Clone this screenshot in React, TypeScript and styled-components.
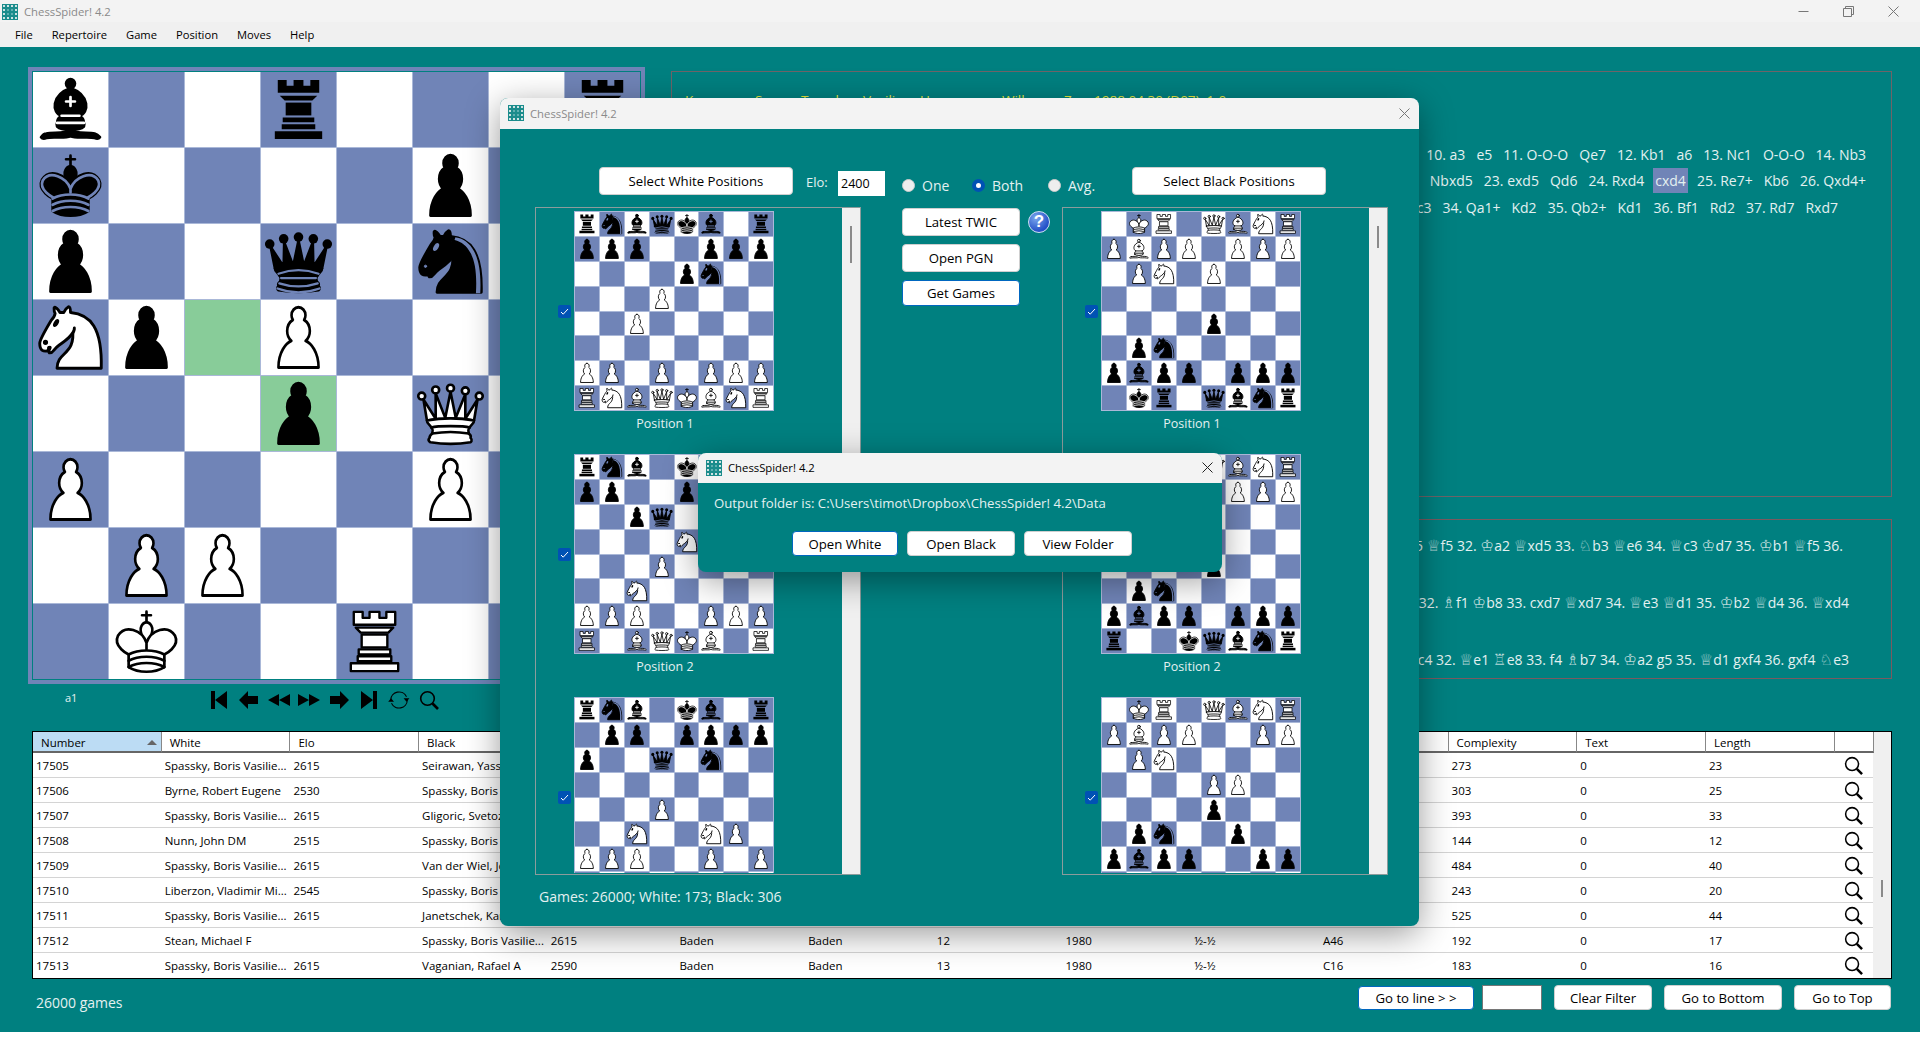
import React from 'react';
import styled, { createGlobalStyle } from 'styled-components';

const TEAL = '#008080';
const BLUE_SQ = '#7084b7';
const WHITE_SQ = '#ffffff';
const GREEN_SQ = '#88cc99';
const LIGHT = '#e4f1f1';
const UI_FONT = '"Open Sans", "Noto Sans", sans-serif';

/* ---------- pieces ---------- */

const VIEW: Record<string, string> = {
  p: '1 5.3 43 38',
  r: '0 0 76 76',
  b: '1.5 1.5 42 42',
  k: '1.5 1.7 42 42',
  q: '1 0.5 43 43',
  n: '2.5 3.5 39 39',
};

const PAWN =
  'M22.5 9c-2.21 0-4 1.79-4 4 0 .89.29 1.71.78 2.38C17.33 16.5 16 18.59 16 21c0 2.03.94 3.84 2.41 5.03-3 1.06-7.41 5.55-7.41 13.47h23c0-7.92-4.41-12.41-7.41-13.47 1.47-1.19 2.41-3 2.41-5.03 0-2.41-1.33-4.5-3.28-5.62.49-.67.78-1.49.78-2.38 0-2.21-1.79-4-4-4z';
const ROOK_PARTS = [
  'M17 8h9v6h7V8h10v6h7V8h9v13H17z',
  'M19 24h38l-5 5H24z',
  'M25 31h26v13H25z',
  'M22 46h32v5H22z',
  'M21 53h34v5H21z',
  'M14 60h48v8H14z',
];
const KNIGHT_BODY = 'M22 10c10.5 1 16.5 8 16 29H15c0-9 10-6.5 8-21';
const KNIGHT_HEAD =
  'M24 18c.38 2.91-5.55 7.37-8 9-3 2-2.82 4.34-5 4-1.042-.94 1.41-3.04 0-3-1 0 .19 1.23-1 2-1 0-4.003 1-4-4 0-2 6-12 6-12s1.89-1.9 2-3.5c-.73-.994-.5-2-.5-3 1-1 3 2.5 3 2.5h2s.78-1.992 2.5-3c1 0 1 3 1 3';
const BISHOP_FOOT =
  'M9 36c3.39-.97 10.11.43 13.5-2 3.39 2.43 10.11 1.03 13.5 2 0 0 1.65.54 3 2-.68.97-1.65.99-3 .5-3.39-.97-10.11.46-13.5-1-3.39 1.46-10.11.03-13.5 1-1.354.49-2.323.47-3-.5 1.354-1.94 3-2 3-2z';
const BISHOP_BODY =
  'M15 32c2.5 2.5 12.5 2.5 15 0 .5-1.5 0-2 0-2 0-2.5-2.5-4-2.5-4 5.5-1.5 6-11.5-5-15.5-11 4-10.5 14-5 15.5 0 0-2.5 1.5-2.5 4 0 0-.5.5 0 2z';
const BISHOP_HEAD = 'M25 8a2.5 2.5 0 1 1-5 0 2.5 2.5 0 1 1 5 0z';
const KING_MITRE = 'M22.5 25s4.5-7.5 3-10.5c0 0-1-2.5-3-2.5s-3 2.5-3 2.5c-1.5 3 3 10.5 3 10.5';
const KING_BODY =
  'M12.5 37c5.5 3.5 14.5 3.5 20 0v-7s9-4.5 6-10.5c-4-6.5-13.5-3.5-16 4V27v-3.5c-2.5-7.5-12-10.5-16-4-3 6 6 10.5 6 10.5v7';

const pieceShapes = (kind: string, detail: string): React.ReactNode => {
  switch (kind) {
    case 'P':
      return <path d={PAWN} fill="#fff" />;
    case 'p':
      return <path d={PAWN} fill="#000" />;
    case 'R':
      return (
        <g fill="#fff" strokeWidth="2.4">
          {ROOK_PARTS.map((d) => (
            <path key={d} d={d} />
          ))}
        </g>
      );
    case 'r':
      return (
        <g fill="#000" stroke="none">
          {ROOK_PARTS.map((d) => (
            <path key={d} d={d} />
          ))}
        </g>
      );
    case 'N':
      return (
        <g fill="#fff">
          <path d={KNIGHT_BODY} />
          <path d={KNIGHT_HEAD} />
          <circle cx="9" cy="25.5" r="0.6" fill="#000" />
          <ellipse cx="14.5" cy="15.5" rx="0.5" ry="1.5" transform="rotate(30 14.5 15.5)" fill="#000" />
        </g>
      );
    case 'n':
      return (
        <g fill="#000">
          <path d={KNIGHT_BODY} />
          <path d={KNIGHT_HEAD} />
          <circle cx="9" cy="25.5" r="0.6" fill={detail} stroke={detail} strokeWidth="0.5" />
          <ellipse cx="14.5" cy="15.5" rx="0.5" ry="1.5" transform="rotate(30 14.5 15.5)" fill={detail} stroke={detail} />
          <path
            d="M24.55 10.4l-.45 1.45.5.15c3.15 1 5.65 2.49 7.9 6.75S35.75 29.06 35.25 39l-.05.5h2.25l.05-.5c.5-10.06-.88-16.85-3.25-21.34-2.37-4.49-5.79-6.64-9.19-7.16l-.51-.1z"
            fill={detail}
            stroke="none"
          />
        </g>
      );
    case 'B':
    case 'b': {
      const black = kind === 'b';
      return (
        <g fill={black ? '#000' : '#fff'}>
          <path d={BISHOP_FOOT} />
          <path d={BISHOP_BODY} />
          <path d={BISHOP_HEAD} />
          <path d="M17.5 26h10M15 30h15m-7.500-14.500v5M20 18h5" fill="none" stroke={black ? detail : '#000'} />
        </g>
      );
    }
    case 'Q':
      return (
        <g fill="#fff">
          <path d="M8 12a2 2 0 1 1-4 0 2 2 0 1 1 4 0zM24.5 7.5a2 2 0 1 1-4 0 2 2 0 1 1 4 0zM41 12a2 2 0 1 1-4 0 2 2 0 1 1 4 0zM16 8.5a2 2 0 1 1-4 0 2 2 0 1 1 4 0zM33 9a2 2 0 1 1-4 0 2 2 0 1 1 4 0z" />
          <path d="M9 26c8.5-1.5 21-1.500 27 0l2-12-7 11V11l-5.500 13.500-3-15-3 15-5.500-14V25L7 14l2 12z" />
          <path d="M9 26c0 2 1.5 2 2.5 4 1 1.5 1 1 .5 3.5-1.5 1-1.5 2.5-1.5 2.5-1.5 1.5.5 2.5.5 2.5 6.5 1 16.5 1 23 0 0 0 1.5-1 0-2.5 0 0 .5-1.5-1-2.5-.5-2.5-.5-2 .5-3.5 1-2 2.5-2 2.5-4-8.5-1.5-18.5-1.5-27 0z" />
          <path d="M11.5 30c3.5-1 18.5-1 22 0M12 33.5c6-1 15-1 21 0" fill="none" />
        </g>
      );
    case 'q':
      return (
        <g fill="#000">
          <g stroke="none">
            <circle cx="6" cy="12" r="2.75" />
            <circle cx="14" cy="9" r="2.75" />
            <circle cx="22.5" cy="8" r="2.75" />
            <circle cx="31" cy="9" r="2.75" />
            <circle cx="39" cy="12" r="2.75" />
          </g>
          <path d="M9 26c8.5-1.5 21-1.5 27 0l2.5-12.5L31 25l-.3-14.1-5.2 13.6-3-14.5-3 14.5-5.2-13.6L14 25 6.5 13.5 9 26z" />
          <path d="M9 26c0 2 1.5 2 2.5 4 1 1.5 1 1 .5 3.5-1.5 1-1 2.5-1 2.5-1.5 1.5 0 2.5 0 2.5 6.5 1 16.5 1 23 0 0 0 1.5-1 0-2.5 0 0 .5-1.5-1-2.5-.5-2.5-.5-2 .5-3.5 1-2 2.5-2 2.5-4-8.5-1.5-18.5-1.5-27 0z" />
          <path d="M11 29a35 35 1 0 1 23 0M12.5 31.5h20M11.5 34.5a35 35 1 0 0 22 0M10.5 37.5a35 35 1 0 0 24 0" fill="none" stroke={detail} strokeWidth="1.3" />
        </g>
      );
    case 'K':
      return (
        <g fill="#fff">
          <path d="M22.5 11.63V6M20 8h5" fill="none" />
          <path d={KING_MITRE} />
          <path d={KING_BODY} />
          <path d="M12.5 30c5.5-3 14.5-3 20 0m-20 3.5c5.5-3 14.5-3 20 0m-20 3.5c5.5-3 14.5-3 20 0" fill="none" />
        </g>
      );
    case 'k':
      return (
        <g fill="#000">
          <path d="M22.5 11.63V6M20 8h5" fill="none" />
          <path d={KING_MITRE} />
          <path d={KING_BODY} />
          <path
            d="M32 29.5s8.5-4 6.03-9.65C34.15 14 25 18 22.5 24.5v2.1-2.1C20 18 10.85 14 6.97 19.85 4.5 25.5 13 29.5 13 29.5"
            fill="none"
            stroke={detail}
          />
          <path d="M12.5 30c5.5-3 14.5-3 20 0M12.5 33.5c5.5-3 14.5-3 20 0M12.5 37c5.5-3 14.5-3 20 0" fill="none" stroke={detail} />
        </g>
      );
    default:
      return null;
  }
};

interface PieceProps {
  kind: string;
  detail: string;
}

const Piece: React.FC<PieceProps> = ({ kind, detail }) => (
  <svg
    width="100%"
    height="100%"
    viewBox={VIEW[kind.toLowerCase()]}
    preserveAspectRatio={kind.toLowerCase() === 'p' ? 'none' : undefined}
    stroke="#000"
    strokeWidth="1.5"
    strokeLinejoin="round"
    strokeLinecap="round"
  >
    {pieceShapes(kind, detail)}
  </svg>
);

/* ---------- boards ---------- */

const expandRank = (rank: string): string[] =>
  rank.split('').flatMap((c) => (/\d/.test(c) ? Array<string>(Number(c)).fill('') : [c]));

interface BoardProps {
  fen: string;
  size: number;
  edge: string;
  marked?: string[];
}

const Board: React.FC<BoardProps> = ({ fen, size, edge, marked = [] }) => (
  <BoardGrid $cell={(size * 8 - 9) / 8} $edge={edge}>
    {fen.split('/').map((rank, r) =>
      expandRank(rank).map((piece, c) => {
        const light = (r + c) % 2 === 0;
        const bg = marked.includes(`${r}${c}`) ? GREEN_SQ : light ? WHITE_SQ : BLUE_SQ;
        return (
          <Square key={`${r}-${c}`} $bg={bg}>
            {piece && <Piece kind={piece} detail={bg} />}
          </Square>
        );
      }),
    )}
  </BoardGrid>
);

const BoardGrid = styled.div<{ $cell: number; $edge: string }>`
  display: grid;
  grid-template-columns: repeat(8, ${(p) => p.$cell}px);
  grid-auto-rows: ${(p) => p.$cell}px;
  gap: 1px;
  background: #aab8d8;
  border: 1px solid ${(p) => p.$edge};
  flex: none;
`;

const Square = styled.div<{ $bg: string }>`
  background: ${(p) => p.$bg};
  overflow: hidden;
`;

/* ---------- small drawings ---------- */

const AppIcon: React.FC = () => (
  <svg width="16" height="16" viewBox="0 0 16 16">
    <rect width="16" height="16" fill="#1b8c8c" />
    <g fill="#cfe3e3">
      {[1, 5, 9, 13].flatMap((y) =>
        [1, 5, 9, 13].map((x) =>
          x === 1 || x === 13 || y === 1 || y === 13 ? <rect key={`${x}${y}`} x={x} y={y} width="2" height="2" /> : null,
        ),
      )}
    </g>
    <g fill="#5fb0b0">
      <rect x="5" y="5" width="2" height="2" />
      <rect x="9" y="9" width="2" height="2" />
      <rect x="9" y="5" width="2" height="2" />
      <rect x="5" y="9" width="2" height="2" />
    </g>
  </svg>
);

const CloseGlyph: React.FC<{ color: string }> = ({ color }) => (
  <svg width="11" height="11" viewBox="0 0 11 11" stroke={color} strokeWidth="1">
    <path d="M0.5 0.5l10 10M10.5 0.5l-10 10" />
  </svg>
);

const Magnifier: React.FC<{ size: number }> = ({ size }) => (
  <svg width={size} height={size} viewBox="0 0 20 20" fill="none" stroke="#000">
    <circle cx="8.5" cy="8.5" r="6.8" strokeWidth="1.6" />
    <path d="M13.5 13.5L19 19" strokeWidth="2.6" />
  </svg>
);

const NAV_PATHS = [
  'M3 1h4v18H3zM19 1v18L7 10z',
  'M1 10L10 1v5h10v8H10v5z',
  'M0 10l11-6v12zM11 10l11-6v12z',
  'M22 10L11 4v12zM11 10L0 4v12z',
  'M21 10l-9-9v5H2v8h10v5z',
  'M19 1h-4v18h4zM3 1v18l12-9z',
];

const NavIcon: React.FC<{ d: string }> = ({ d }) => (
  <svg width="22" height="20" viewBox="0 0 22 20">
    <path d={d} fill="#000" />
  </svg>
);

const FlipIcon: React.FC = () => (
  <svg width="22" height="20" viewBox="0 0 26 24" fill="none" stroke="#000" strokeWidth="1.3">
    <path d="M3 12A10 10 0 0 1 22 8" />
    <path d="M23 12A10 10 0 0 1 4 16" />
    <path d="M18.5 10h7l-3.5 4zM0 14h7L3.500 10z" fill="#000" stroke="none" />
  </svg>
);

/* ---------- data ---------- */

const MAIN_FEN = 'b2r3r/k4p2/p2q1n2/Np1P4/3p1Q2/P4P2/1PP5/1K2R3';

const WHITE_BOARDS = [
  'rnbqkb1r/ppp2ppp/4pn2/3P4/2P5/8/PP1P1PPP/RNBQKBNR',
  'rnb1kb1r/pp2pppp/2pq4/4N3/3P4/2N5/PPP2PPP/R1BQKB1R',
  'rnb1kb1r/1pp1pppp/p2q1n2/8/3P4/2N2NP1/PPP2P1P/R1BQKB1R',
];

const BLACK_BOARDS = [
  '1KR1QBNR/PBPP1PPP/1PN1P3/8/4p3/1pn5/pbpp1ppp/1kr1qbnr',
  '1KR1QBNR/PBPP1PPP/1PN5/8/4p3/1pn5/pbpp1ppp/r2kqbnr',
  '1KR1QBNR/PBPP2PP/1PN5/4PP2/4p3/1pn2p2/pbpp2pp/1kr1qbnr',
];

const SPASSKY = 'Spassky, Boris Vasilie...';

const GAMES: string[][] = [
  ['17505', SPASSKY, '2615', 'Seirawan, Yasser', '2595', 'Baden', 'Baden', '5', '1980', '½-½', 'E12', '273', '0', '23'],
  ['17506', 'Byrne, Robert Eugene', '2530', SPASSKY, '2615', 'Baden', 'Baden', '6', '1980', '½-½', 'B19', '303', '0', '25'],
  ['17507', SPASSKY, '2615', 'Gligoric, Svetozar', '2540', 'Baden', 'Baden', '7', '1980', '½-½', 'E81', '393', '0', '33'],
  ['17508', 'Nunn, John DM', '2515', SPASSKY, '2615', 'Baden', 'Baden', '8', '1980', '½-½', 'C95', '144', '0', '12'],
  ['17509', SPASSKY, '2615', 'Van der Wiel, John', '2480', 'Baden', 'Baden', '9', '1980', '½-½', 'B92', '484', '0', '40'],
  ['17510', 'Liberzon, Vladimir Mi...', '2545', SPASSKY, '2615', 'Baden', 'Baden', '10', '1980', '½-½', 'A09', '243', '0', '20'],
  ['17511', SPASSKY, '2615', 'Janetschek, Karl', '2370', 'Baden', 'Baden', '11', '1980', '1-0', 'C92', '525', '0', '44'],
  ['17512', 'Stean, Michael F', '', SPASSKY, '2615', 'Baden', 'Baden', '12', '1980', '½-½', 'A46', '192', '0', '17'],
  ['17513', SPASSKY, '2615', 'Vaganian, Rafael A', '2590', 'Baden', 'Baden', '13', '1980', '½-½', 'C16', '183', '0', '16'],
];

const COLUMNS = ['Number', 'White', 'Elo', 'Black', 'Elo', 'Event', 'Site', 'Round', 'Year', 'Result', 'ECO', 'Complexity', 'Text', 'Length', ''];

const HEADER_WORDS = ['Korneev', 'Sergey', 'Tomsk', 'Vasiliy', 'Uzman', 'Wilhem', 'Z', '1988.04.30 (D07)  1-0'];

/* ---------- parts ---------- */

const PositionList: React.FC<{ boards: string[]; thumb: number }> = ({ boards, thumb }) => (
  <ListBox>
    <ListEntries>
      {boards.map((fen, i) => (
        <Entry key={fen}>
          <EntryRow>
            <CheckBox>
              <svg width="9" height="9" viewBox="0 0 9 9" fill="none" stroke="#fff" strokeWidth="1">
                <path d="M1 5l2.200 2.200L8 2" />
              </svg>
            </CheckBox>
            <Board fen={fen} size={25} edge="#aab8d8" />
          </EntryRow>
          <EntryLabel>Position {i + 1}</EntryLabel>
        </Entry>
      ))}
    </ListEntries>
    <ScrollTrack>
      <ScrollThumb style={{ height: thumb }} />
    </ScrollTrack>
  </ListBox>
);

const Move: React.FC<{ text: string; active?: boolean }> = ({ text, active }) => <MoveItem $active={active}>{text}</MoveItem>;

const Glyph = styled.span`
  font-family: 'DejaVu Sans', sans-serif;
  font-size: 15.5px;
  color: #b6d8d8;
`;

const withGlyphs = (line: string): React.ReactNode =>
  line.split(/([♔♕♖♗♘])/).map((part, i) => (/[♔♕♖♗♘]/.test(part) ? <Glyph key={i}>{part}</Glyph> : part));

const App: React.FC = () => (
  <Window>
    <GlobalStyle />
    <TitleBar>
      <AppIcon />
      <AppTitle>ChessSpider! 4.2</AppTitle>
      <WindowControls>
        <WindowControl>
          <svg width="11" height="11" viewBox="0 0 11 11" stroke="#777">
            <path d="M0.500 5.500h10" />
          </svg>
        </WindowControl>
        <WindowControl>
          <svg width="11" height="11" viewBox="0 0 11 11" fill="none" stroke="#777">
            <path d="M0.500 2.500h8v8h-8zM2.500 2.500v-2h8v8h-2" />
          </svg>
        </WindowControl>
        <WindowControl>
          <CloseGlyph color="#777" />
        </WindowControl>
      </WindowControls>
    </TitleBar>
    <MenuBar>
      {['File', 'Repertoire', 'Game', 'Position', 'Moves', 'Help'].map((item) => (
        <MenuItem key={item}>{item}</MenuItem>
      ))}
    </MenuBar>

    <Main>
      <TopArea>
        <BoardColumn>
          <BoardFrame>
            <Board fen={MAIN_FEN} size={76.125} edge={TEAL} marked={['32', '43']} />
          </BoardFrame>
          <NavRow>
            <SquareName>a1</SquareName>
            {NAV_PATHS.map((d) => (
              <NavSlot key={d}>
                <NavIcon d={d} />
              </NavSlot>
            ))}
            <NavSlot>
              <FlipIcon />
            </NavSlot>
            <NavSlot>
              <Magnifier size={20} />
            </NavSlot>
          </NavRow>
        </BoardColumn>

        <PanelColumn>
          <MovesPanel>
            <GameHeader>
              {HEADER_WORDS.map((word) => (
                <span key={word}>{word}</span>
              ))}
            </GameHeader>
            <MoveLine $end={25}>
              {['10. a3', 'e5', '11. O-O-O', 'Qe7', '12. Kb1', 'a6', '13. Nc1', 'O-O-O', '14. Nb3'].map((m) => (
                <Move key={m} text={m} />
              ))}
            </MoveLine>
            <MoveLine $end={25}>
              {['Nbxd5', '23. exd5', 'Qd6', '24. Rxd4'].map((m) => (
                <Move key={m} text={m} />
              ))}
              <Move text="cxd4" active />
              {['25. Re7+', 'Kb6', '26. Qxd4+'].map((m) => (
                <Move key={m} text={m} />
              ))}
            </MoveLine>
            <MoveLine $end={53}>
              {['c3', '34. Qa1+', 'Kd2', '35. Qb2+', 'Kd1', '36. Bf1', 'Rd2', '37. Rd7', 'Rxd7'].map((m) => (
                <Move key={m} text={m} />
              ))}
            </MoveLine>
          </MovesPanel>
          <NotesPanel>
            <NoteLine $end={48}>{withGlyphs('5 ♕f5 32. ♔a2 ♕xd5 33. ♘b3 ♕e6 34. ♕c3 ♔d7 35. ♔b1 ♕f5 36.')}</NoteLine>
            <NoteLine $end={42}>{withGlyphs('7 32. ♗f1 ♔b8 33. cxd7 ♕xd7 34. ♕e3 ♕d1 35. ♔b2 ♕d4 36. ♕xd4')}</NoteLine>
            <NoteLine $end={42}>{withGlyphs('♘c4 32. ♕e1 ♖e8 33. f4 ♗b7 34. ♔a2 g5 35. ♕d1 gxf4 36. gxf4 ♘e3')}</NoteLine>
          </NotesPanel>
        </PanelColumn>
      </TopArea>

      <GamesTable>
        <TableBody>
          <HeaderRow>
            {COLUMNS.map((col, i) => (
              <HeaderCell key={`${col}${i}`} $active={i === 0}>
                {col}
                {i === 0 && <SortArrow />}
              </HeaderCell>
            ))}
          </HeaderRow>
          {GAMES.map((game) => (
            <DataRow key={game[0]}>
              {game.map((value, i) => (
                <DataCell key={i}>{value}</DataCell>
              ))}
              <IconCell>
                <Magnifier size={19} />
              </IconCell>
            </DataRow>
          ))}
        </TableBody>
        <TableScroll>
          <ScrollThumb style={{ height: 17, marginTop: 148 }} />
        </TableScroll>
      </GamesTable>

      <Footer>
        <GameCount>26000 games</GameCount>
        <FooterActions>
          <PushButton $w={116} $h={24} $primary>
            Go to line &gt; &gt;
          </PushButton>
          <LineInput readOnly />
          <PushButton $w={98} $h={25}>
            Clear Filter
          </PushButton>
          <PushButton $w={118} $h={25}>
            Go to Bottom
          </PushButton>
          <PushButton $w={97} $h={25}>
            Go to Top
          </PushButton>
        </FooterActions>
      </Footer>
    </Main>

    <PositionsDialog>
      <DialogTitleBar $h={31}>
        <AppIcon />
        <DialogTitle $dim>ChessSpider! 4.2</DialogTitle>
        <DialogClose>
          <CloseGlyph color="#777" />
        </DialogClose>
      </DialogTitleBar>
      <DialogBody>
        <DialogToolbar>
          <PushButton $w={194} $h={28}>
            Select White Positions
          </PushButton>
          <EloLabel>Elo:</EloLabel>
          <EloInput readOnly value="2400" />
          <RadioGroup>
            <RadioOption>
              <Radio />
              One
            </RadioOption>
            <RadioOption>
              <Radio $on />
              Both
            </RadioOption>
            <RadioOption>
              <Radio />
              Avg.
            </RadioOption>
          </RadioGroup>
          <PushButton $w={194} $h={28}>
            Select Black Positions
          </PushButton>
        </DialogToolbar>
        <DialogColumns>
          <PositionList boards={WHITE_BOARDS} thumb={37} />
          <CenterColumn>
            <TwicRow>
              <PushButton $w={118} $h={28}>
                Latest TWIC
              </PushButton>
              <HelpIcon>?</HelpIcon>
            </TwicRow>
            <PushButton $w={118} $h={28}>
              Open PGN
            </PushButton>
            <PushButton $w={118} $h={26} $primary>
              Get Games
            </PushButton>
          </CenterColumn>
          <PositionList boards={BLACK_BOARDS} thumb={22} />
        </DialogColumns>
        <DialogStatus>Games: 26000; White: 173; Black: 306</DialogStatus>
      </DialogBody>
    </PositionsDialog>

    <OutputDialog>
      <DialogTitleBar $h={30}>
        <AppIcon />
        <DialogTitle>ChessSpider! 4.2</DialogTitle>
        <DialogClose>
          <CloseGlyph color="#222" />
        </DialogClose>
      </DialogTitleBar>
      <OutputBody>
        <OutputText>Output folder is: C:\Users\timot\Dropbox\ChessSpider! 4.2\Data</OutputText>
        <OutputActions>
          <PushButton $w={106} $h={25} $primary>
            Open White
          </PushButton>
          <PushButton $w={108} $h={25}>
            Open Black
          </PushButton>
          <PushButton $w={108} $h={25}>
            View Folder
          </PushButton>
        </OutputActions>
      </OutputBody>
    </OutputDialog>
  </Window>
);

const GlobalStyle = createGlobalStyle`
  html, body {
    margin: 0;
    padding: 0;
    background: #ffffff;
  }
  * {
    box-sizing: border-box;
  }
`;

const Window = styled.div`
  position: relative;
  width: 1920px;
  height: 1051px;
  overflow: hidden;
  background: #ffffff;
  font-family: ${UI_FONT};
  font-size: 12px;
`;

const TitleBar = styled.div`
  display: flex;
  align-items: center;
  height: 22px;
  padding-left: 2px;
  padding-top: 1px;
  background: #f3f3f3;
`;

const AppTitle = styled.span`
  margin-left: 6px;
  font-size: 11.3px;
  color: #8a8a8a;
`;

const WindowControls = styled.div`
  display: flex;
  margin-left: auto;
  margin-right: 4px;
`;

const WindowControl = styled.div`
  display: flex;
  align-items: center;
  justify-content: center;
  width: 45px;
  height: 21px;
`;

const MenuBar = styled.div`
  display: flex;
  align-items: center;
  gap: 19px;
  height: 25px;
  padding-left: 15px;
  background: #f0f0f0;
  font-size: 11.2px;
`;

const MenuItem = styled.span`
  color: #000;
`;

const Main = styled.main`
  height: 985px;
  padding: 20px 28px 0;
  background: ${TEAL};
`;

const TopArea = styled.div`
  display: flex;
  gap: 26px;
  height: 664px;
`;

const BoardColumn = styled.div`
  flex: none;
  width: 617px;
`;

const BoardFrame = styled.div`
  display: flex;
  width: 617px;
  height: 617px;
  border: 4px solid ${BLUE_SQ};
`;

const NavRow = styled.div`
  display: flex;
  align-items: center;
  gap: 8px;
  height: 20px;
  margin-top: 6px;
`;

const SquareName = styled.span`
  width: 172px;
  padding-left: 37px;
  margin-top: -6px;
  font-size: 11px;
  color: ${LIGHT};
`;

const NavSlot = styled.div`
  display: flex;
  width: 22px;
  height: 20px;
  align-items: center;
  justify-content: center;
`;

const PanelColumn = styled.div`
  flex: 1;
  display: flex;
  flex-direction: column;
  gap: 22px;
  padding-top: 4px;
  min-width: 0;
  width: 1221px;
`;

const MovesPanel = styled.section`
  height: 426px;
  padding-top: 19px;
  border: 1px solid #6e6468;
  overflow: hidden;
`;

const GameHeader = styled.div`
  display: grid;
  grid-template-columns: 70px 46px 62px 57px 82px 62px 30px auto;
  height: 50px;
  padding-left: 13px;
  font-size: 13.5px;
  line-height: 19px;
  white-space: pre;
  color: #e8e840;
`;

const MoveLine = styled.div<{ $end: number }>`
  display: flex;
  justify-content: flex-end;
  gap: 7px;
  height: 26.5px;
  align-items: center;
  padding-right: ${(p) => p.$end - 2}px;
  font-size: 14px;
  color: ${LIGHT};
  white-space: nowrap;
`;

const MoveItem = styled.span<{ $active?: boolean }>`
  padding: 3px 2px;
  background: ${(p) => (p.$active ? BLUE_SQ : 'transparent')};
`;

const NotesPanel = styled.section`
  display: flex;
  flex-direction: column;
  gap: 33px;
  height: 160px;
  padding-top: 14px;
  border: 1px solid #7a5a60;
  overflow: hidden;
`;

const NoteLine = styled.div<{ $end: number }>`
  height: 24px;
  line-height: 24px;
  text-align: right;
  padding-right: ${(p) => p.$end}px;
  font-size: 14px;
  color: ${LIGHT};
  white-space: nowrap;
`;

const GamesTable = styled.div`
  display: flex;
  width: 1860px;
  height: 248px;
  margin-left: 4px;
  border: 1px solid #000;
  background: #ffffff;
  font-size: 11.5px;
`;

const TableBody = styled.div`
  flex: 1;
  min-width: 0;
`;

const TableScroll = styled.div`
  display: flex;
  flex-direction: column;
  align-items: center;
  flex: none;
  width: 18px;
  background: #f0f0f0;
`;

const HeaderRow = styled.div`
  display: grid;
  grid-template-columns: repeat(14, 128.700px) 39px;
  height: 21px;
`;

const HeaderCell = styled.div<{ $active?: boolean }>`
  position: relative;
  display: flex;
  align-items: center;
  padding-left: 8px;
  padding-top: 1px;
  border-right: 1px solid #888;
  border-bottom: 2px solid #666;
  background: ${(p) => (p.$active ? '#bcdcf4' : '#ffffff')};
`;

const SortArrow = styled.span`
  position: absolute;
  right: 4px;
  top: 8px;
  border-left: 5px solid transparent;
  border-right: 5px solid transparent;
  border-bottom: 5px solid #666;
`;

const DataRow = styled.div`
  display: grid;
  grid-template-columns: repeat(14, 128.700px) 39px;
  height: 25px;
  border-bottom: 1px solid #d4d4d4;
  &:last-child {
    border-bottom: none;
  }
`;

const DataCell = styled.div`
  padding: 2px 0 0 3px;
  line-height: 22px;
  white-space: nowrap;
  overflow: hidden;
  color: #000;
`;

const IconCell = styled.div`
  display: flex;
  align-items: center;
  padding-left: 9px;
`;

const Footer = styled.footer`
  display: flex;
  align-items: center;
  justify-content: space-between;
  width: 1863px;
  margin-top: 6px;
  height: 25px;
`;

const GameCount = styled.span`
  padding-left: 8px;
  margin-top: 10px;
  font-size: 14px;
  color: ${LIGHT};
`;

const FooterActions = styled.div`
  display: flex;
  align-items: center;
  gap: 12px;
`;

const PushButton = styled.button<{ $w: number; $h: number; $primary?: boolean }>`
  flex: none;
  width: ${(p) => p.$w}px;
  height: ${(p) => p.$h}px;
  padding: 0;
  border: 1px solid ${(p) => (p.$primary ? '#0067c0' : '#cfcfcf')};
  border-radius: 4px;
  background: #ffffff;
  color: #000;
  font-family: ${UI_FONT};
  font-size: 13.2px;
`;

const LineInput = styled.input`
  width: 60px;
  height: 25px;
  margin-left: -4px;
  padding: 0;
  border: 1px solid #767676;
  background: #fff;
`;

const PositionsDialog = styled.div`
  position: absolute;
  left: 500px;
  top: 98px;
  width: 919px;
  height: 828px;
  border-radius: 8px;
  overflow: hidden;
  background: ${TEAL};
  box-shadow: 0 8px 34px rgba(0, 0, 0, 0.4);
`;

const OutputDialog = styled.div`
  position: absolute;
  left: 698px;
  top: 453px;
  width: 524px;
  height: 119px;
  border-radius: 8px;
  overflow: hidden;
  background: ${TEAL};
  box-shadow: 0 8px 34px rgba(0, 0, 0, 0.4);
`;

const DialogTitleBar = styled.div<{ $h: number }>`
  display: flex;
  align-items: center;
  height: ${(p) => p.$h}px;
  padding: 0 0 1px 8px;
  background: #f3f3f3;
`;

const DialogTitle = styled.span<{ $dim?: boolean }>`
  margin-left: 6px;
  font-size: 11.3px;
  color: ${(p) => (p.$dim ? '#8a8a8a' : '#000')};
`;

const DialogClose = styled.div`
  display: flex;
  margin-left: auto;
  margin-right: 9px;
`;

const DialogBody = styled.div`
  padding: 38px 0 0 35px;
  color: ${LIGHT};
`;

const DialogToolbar = styled.div`
  display: flex;
  height: 29px;
  padding-left: 64px;
`;

const EloLabel = styled.span`
  width: 23px;
  margin: 6px 0 0 13px;
  font-size: 13px;
`;

const EloInput = styled.input`
  width: 47px;
  height: 25px;
  margin: 4px 0 0 9px;
  padding: 0 0 0 3px;
  border: none;
  background: #fff;
  color: #000;
  font-family: ${UI_FONT};
  font-size: 12.5px;
`;

const RadioGroup = styled.div`
  display: grid;
  grid-template-columns: 70px 76px 84px;
  margin-left: 17px;
  padding-top: 9px;
  font-size: 14px;
`;

const RadioOption = styled.label`
  display: flex;
  align-items: center;
  gap: 7px;
  height: 18px;
`;

const Radio = styled.span<{ $on?: boolean }>`
  width: 13px;
  height: 13px;
  border-radius: 50%;
  background: ${(p) => (p.$on ? '#fff' : '#eeeeee')};
  border: ${(p) => (p.$on ? '4px solid #0052b4' : '1px solid #cccccc')};
`;

const DialogColumns = styled.div`
  display: flex;
  margin-top: 11px;
`;

const CenterColumn = styled.div`
  display: flex;
  flex-direction: column;
  gap: 8px;
  width: 201px;
  padding: 1px 0 0 41px;
`;

const TwicRow = styled.div`
  display: flex;
  align-items: center;
  gap: 8px;
`;

const HelpIcon = styled.span`
  display: flex;
  align-items: center;
  justify-content: center;
  width: 22px;
  height: 22px;
  border-radius: 50%;
  border: 1px solid #d0e0f4;
  background: radial-gradient(circle at 35% 30%, #7aa7ec, #2450c8 70%);
  color: #fff;
  font-family: 'Liberation Sans', sans-serif;
  font-size: 17px;
  font-weight: 700;
`;

const ListBox = styled.div`
  display: flex;
  width: 326px;
  height: 668px;
  border: 1px solid #8c9c9c;
`;

const ListEntries = styled.div`
  flex: 1;
  min-width: 0;
  margin: 3px 0 1px;
  overflow: hidden;
`;

const Entry = styled.div`
  height: 243px;
`;

const EntryRow = styled.div`
  display: flex;
  align-items: center;
  gap: 3px;
  padding-left: 22px;
`;

const CheckBox = styled.span`
  display: flex;
  align-items: center;
  justify-content: center;
  width: 13px;
  height: 13px;
  border-radius: 2px;
  background: #0052b4;
`;

const EntryLabel = styled.div`
  margin-top: 4px;
  padding-left: 38px;
  width: 220px;
  text-align: center;
  font-size: 12.5px;
  color: ${LIGHT};
`;

const ScrollTrack = styled.div`
  display: flex;
  flex-direction: column;
  align-items: center;
  flex: none;
  width: 18px;
  padding-top: 18px;
  background: #f0f0f0;
`;

const ScrollThumb = styled.div`
  width: 2px;
  background: #8a8a8a;
`;

const DialogStatus = styled.div`
  margin: 12px 0 0 4px;
  font-size: 14px;
  color: ${LIGHT};
`;

const OutputBody = styled.div`
  padding: 11px 0 0 16px;
`;

const OutputText = styled.div`
  height: 18px;
  line-height: 18px;
  font-size: 13.2px;
  color: ${LIGHT};
`;

const OutputActions = styled.div`
  display: flex;
  gap: 9px;
  margin: 19px 0 0 78px;
`;

export default App;
